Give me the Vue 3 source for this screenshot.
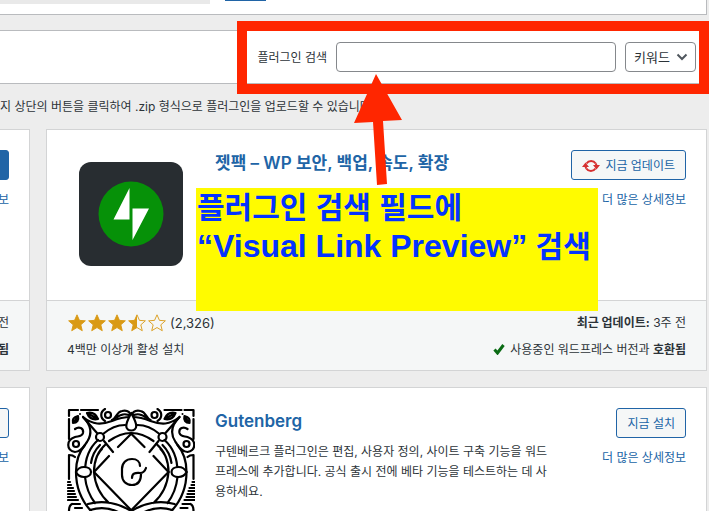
<template>
  <div class="page">
    <div class="upload-panel">
      <div class="file-field"></div>
      <div class="file-submit"></div>
    </div>

    <div class="filter-bar">
      <form class="search-form" @submit.prevent>
        <label for="search-plugins">플러그인 검색</label>
        <input id="search-plugins" v-model="keyword" type="text" />
        <div class="select-wrap">
          <select v-model="searchType" aria-label="검색 방식">
            <option value="term">키워드</option>
          </select>
          <svg class="chevron" viewBox="0 0 12 8"><path d="M1.500 1.500L6 6l4.500-4.500" /></svg>
        </div>
      </form>
      <div class="red-frame"></div>
    </div>

    <p class="intro">지 상단의 버튼을 클릭하여 .zip 형식으로 플러그인을 업로드할 수 있습니다.</p>

    <div class="cards">
      <div class="card clipped">
        <div class="card-top">
          <div class="actions">
            <button class="btn primary" aria-label="활성화"></button>
            <a href="#">보</a>
          </div>
        </div>
        <div class="card-bottom">
          <div class="col right">
            <div>전</div>
            <div><b>됨</b></div>
          </div>
        </div>
      </div>

      <div class="card">
        <div class="card-top">
          <svg class="icon" viewBox="0 0 128 128">
            <rect x="12" y="12" width="104" height="104" rx="12" fill="#282d31" />
            <circle cx="64" cy="64" r="32.500" fill="#069108" />
            <path d="M62.500 38v31.500H46.500zM65.500 58.500h16.500l-16.500 31.500z" fill="#fff" />
          </svg>
          <div class="desc">
            <h3><a href="#">젯팩 – WP 보안, 백업, 속도, 확장</a></h3>
          </div>
          <div class="actions">
            <button class="btn">
              <svg class="update" viewBox="0 0 18 16">
                <path d="M4.500 5.500A5.500 5.500 0 0 1 13.700 5.500M13.500 10.500A5.500 5.500 0 0 1 4.300 10.500" />
                <path d="M3.500 8A5.500 5.500 0 0 0 4.300 10.500M14.500 8A5.500 5.500 0 0 0 13.700 5.500" />
                <path class="head" d="M0 9L3.500 4.500L7 9zM11 7h7l-3.500 4.500z" />
              </svg>
              지금 업데이트
            </button>
            <a href="#">더 많은 상세정보</a>
          </div>
        </div>
        <div class="card-bottom">
          <div class="col">
            <div class="rating">
              <svg v-for="(s, i) in stars" :key="i" class="star" viewBox="-1 -1 22 22">
                <path class="outline" :d="starPath" />
                <path v-if="s === 'full'" class="fill" :d="starPath" />
                <path v-if="s === 'half'" class="fill" d="M10 1L7.300 7.100.800 7.600l5 4.400-1.600 6.500L10 15z" />
              </svg>
              <span class="count">(2,326)</span>
            </div>
            <div>4백만 이상개 활성 설치</div>
          </div>
          <div class="col right">
            <div><b>최근 업데이트:</b> 3주 전</div>
            <div>
              <svg class="check" viewBox="0 0 12 12"><path d="M1.500 6.500l3 3.500L10.500 2" /></svg>
              사용중인 워드프레스 버전과 <b>호환됨</b>
            </div>
          </div>
        </div>
      </div>

      <div class="card clipped">
        <div class="card-top">
          <div class="actions">
            <button class="btn" aria-label="지금 설치"></button>
            <a href="#">보</a>
          </div>
        </div>
      </div>

      <div class="card">
        <div class="card-top">
          <svg class="icon ornament" viewBox="0 0 128 128">
            <g v-for="side in ['left', 'right']" :key="side" :transform="side === 'right' ? 'translate(128.500 0) scale(-1 1)' : undefined">
              <path d="M2 8V2h9M14 2h17M2 11v20M8 49c-2-2-4-2-6-2v24" />
              <path d="M1 74h2M1 77h3M1 80h5M1 83h6M1 86h7M1 89h8M1 92h10M6 96h7M8 100h7M2 103c0-4 1-6 3-7" />
              <path d="M6 15c-1-4 1-6 5-7 1 4-1 7-5 7zM7 14l3-4M20 5c5-1 9 1 11 6-5 1-9-1-11-6zM22 6l7 4" />
              <circle class="dot" cx="13" cy="6" r="1" />
              <circle cx="41" cy="7" r="3" />
              <path d="M38 1c-5 3-5 9 0 12M45 12c5-2 4-8 10-9 5-1 8 1 9 5-6-3-10-2-15 2" />
              <circle cx="9" cy="36" r="3" />
              <path d="M8 21c4-3 9-1 8 4-1 4-5 3-8 4-9 3-9 13 0 15 6 0 9-6 12-10 6-9 3-18-4-25" />
              <path d="M9 64c0-10 3-20 9-27M16 9c10 8 18 8 29 4 7-3 13-4 19-4M16 9l14 16" />
              <path d="M18 64c0-13 4-24 13-32M36 26c7-6 14-9 22-9" />
              <path d="M27 64c0-12 5-22 12-28M42 33c7-5 14-8 22-8M24 55c1-7 4-13 9-18M28 55c1-5 3-10 7-14" />
              <circle cx="33" cy="29" r="4" />
              <path d="M37 33l9 11M64 26L51 39M42 48L27 64l37 38" />
              <path d="M9 64c0 15 5 28 15 39M18 69c1 10 4 18 10 26M27 64c1 13 6 23 15 31M21 96c15-4 31-1 43 7M23 102c10-3 21-2 30 3" />
              <path class="solid" d="M9 64c2-4 5-5 8-5 4 0 7 2 7 5s-3 5-7 5c-3 0-6-1-8-5z" />
            </g>
            <path class="solid" d="M64.250 5c-2 4-5 9-5 13 0 6 10 6 10 0 0-4-3-9-5-13z" />
            <path d="M73 58c0-4-3-7-8-7-6 0-10 4-10 10v6c0 6 4 10 10 10s9-4 9-11M65 70c0-6 5-5 8-5s5-2 6-5" />
          </svg>
          <div class="desc">
            <h3><a href="#">Gutenberg</a></h3>
            <p>구텐베르크 플러그인은 편집, 사용자 정의, 사이트 구축 기능을 워드<br />프레스에 추가합니다. 공식 출시 전에 베타 기능을 테스트하는 데 사<br />용하세요.</p>
          </div>
          <div class="actions">
            <button class="btn">지금 설치</button>
            <a href="#">더 많은 상세정보</a>
          </div>
        </div>
      </div>
    </div>

    <div class="note">
      플러그인 검색 필드에<br />
      <span>“Visual Link Preview”</span> 검색
    </div>
    <svg class="arrow" viewBox="0 0 48 112">
      <path d="M22 0L48 46l-19 1 4 63-10 1-4-63-19 1z" />
    </svg>
  </div>
</template>

<script setup>
import { ref } from 'vue'

const keyword = ref('')
const searchType = ref('term')
const stars = ['full', 'full', 'full', 'half', 'empty']
const starPath = 'M10 1l2.700 6.100 6.500.500-5 4.400 1.600 6.500L10 15l-5.800 3.500L5.800 12l-5-4.400 6.500-.500z'
</script>

<style>
body {
  margin: 0;
  background: #ededed;
}
</style>

<style scoped>
* {
  box-sizing: border-box;
}
.page {
  position: relative;
  height: 100vh;
  overflow: hidden;
  padding-right: 2px;
  color: #2c3338;
  font: 12px/20px Inter, "Noto Sans CJK KR", sans-serif;
}
a {
  color: #2064a6;
  text-decoration: none;
}
.upload-panel {
  display: flex;
  gap: 15px;
  height: 15px;
  background: #fff;
  border: 1px solid #b9bbbe;
  border-width: 0 1px 1px 0;
}
.file-field {
  width: 210px;
  height: 4px;
  background: #e9e9e9;
}
.file-submit {
  width: 41px;
  height: 1px;
  background: #2064a6;
}
.filter-bar {
  position: relative;
  display: flex;
  justify-content: flex-end;
  margin-top: 15px;
  padding: 11px 10px;
  background: #fff;
  border: 1px solid #b9bbbe;
  border-width: 1px 1px 1px 0;
}
.search-form {
  display: flex;
  align-items: center;
}
.search-form label {
  line-height: 22px;
  padding-top: 2px;
}
.search-form input {
  width: 280px;
  height: 30px;
  margin: 0 9px;
  border: 1px solid #85888c;
  border-radius: 4px;
  background: #fff;
}
.select-wrap {
  position: relative;
}
.select-wrap select {
  display: block;
  width: 71px;
  height: 30px;
  padding: 0 8px;
  appearance: none;
  color: #2c3338;
  font: 13px Inter, "Noto Sans CJK KR", sans-serif;
  border: 1px solid #85888c;
  border-radius: 4px;
  background: #fff;
}
.chevron {
  position: absolute;
  top: 11px;
  right: 8px;
  width: 12px;
  height: 8px;
  fill: none;
  stroke: #50575e;
  stroke-width: 2;
  pointer-events: none;
}
.red-frame {
  position: absolute;
  top: -10px;
  right: -3px;
  bottom: -11px;
  width: 472px;
  border: 10px solid #ff2600;
  pointer-events: none;
}
.intro {
  margin: 13px 0 12px;
  white-space: nowrap;
}
.cards {
  display: grid;
  grid-template-columns: 30px 1fr;
  gap: 16px;
}
.card {
  display: flex;
  flex-direction: column;
  min-width: 0;
  background: #fff;
  border: 1px solid #d3d4d5;
}
.card-top {
  display: flex;
  gap: 20px;
  min-height: 170px;
  padding: 20px;
}
.icon {
  flex: none;
  width: 128px;
  height: 128px;
}
.ornament {
  fill: none;
  stroke: #000;
  stroke-width: 2.2;
  stroke-linecap: round;
  stroke-linejoin: round;
}
.ornament .solid {
  fill: #fff;
}
.ornament .dot {
  fill: #000;
  stroke: none;
}
.desc {
  flex: 1;
  white-space: nowrap;
}
h3 {
  margin: 0 0 9px;
  padding-top: 1px;
  font-size: 17px;
  font-weight: 600;
  line-height: 24px;
}
.desc p {
  margin: 0;
}
.actions {
  display: flex;
  flex-direction: column;
  align-items: flex-end;
  gap: 10px;
}
.btn {
  display: flex;
  align-items: center;
  gap: 5px;
  height: 30px;
  padding: 1px 10px 0;
  color: #2064a6;
  font: inherit;
  white-space: nowrap;
  background: #f5f7f7;
  border: 1px solid #2064a6;
  border-radius: 3px;
}
.btn.primary {
  background: #2064a6;
}
.update {
  width: 18px;
  height: 16px;
  fill: none;
  stroke: #d63030;
  stroke-width: 2;
}
.update .head {
  fill: #d63030;
  stroke: none;
}
.card-bottom {
  display: flex;
  justify-content: space-between;
  padding: 12px 20px 10px;
  background: #f5f7f7;
  border-top: 1px solid #d3d4d5;
}
.clipped {
  overflow: hidden;
  border-left: 0;
}
.clipped .card-top,
.clipped .card-bottom {
  justify-content: flex-end;
  padding-left: 0;
  white-space: nowrap;
}
.col {
  display: flex;
  flex-direction: column;
  gap: 7px;
}
.right {
  text-align: right;
}
.rating {
  display: flex;
  align-items: center;
  height: 20px;
}
.star {
  width: 20px;
  height: 20px;
}
.star .outline {
  fill: none;
  stroke: #d99a16;
}
.star .fill {
  fill: #d99a16;
}
.count {
  margin-left: 3px;
  font-size: 13px;
}
.check {
  width: 12px;
  height: 12px;
  margin-right: 2px;
  vertical-align: -1px;
  fill: none;
  stroke: #0a6b14;
  stroke-width: 3;
}
.note {
  position: absolute;
  top: 188px;
  left: 196px;
  width: 402px;
  height: 123px;
  padding-left: 1px;
  color: #0433ff;
  font: bold 30px/39px "Liberation Sans", "Noto Sans CJK KR", sans-serif;
  white-space: nowrap;
  background: #fffb00;
}
.note span {
  font-size: 32px;
}
.arrow {
  position: absolute;
  top: 74px;
  left: 354px;
  width: 48px;
  height: 112px;
  fill: #ff2600;
}
</style>
